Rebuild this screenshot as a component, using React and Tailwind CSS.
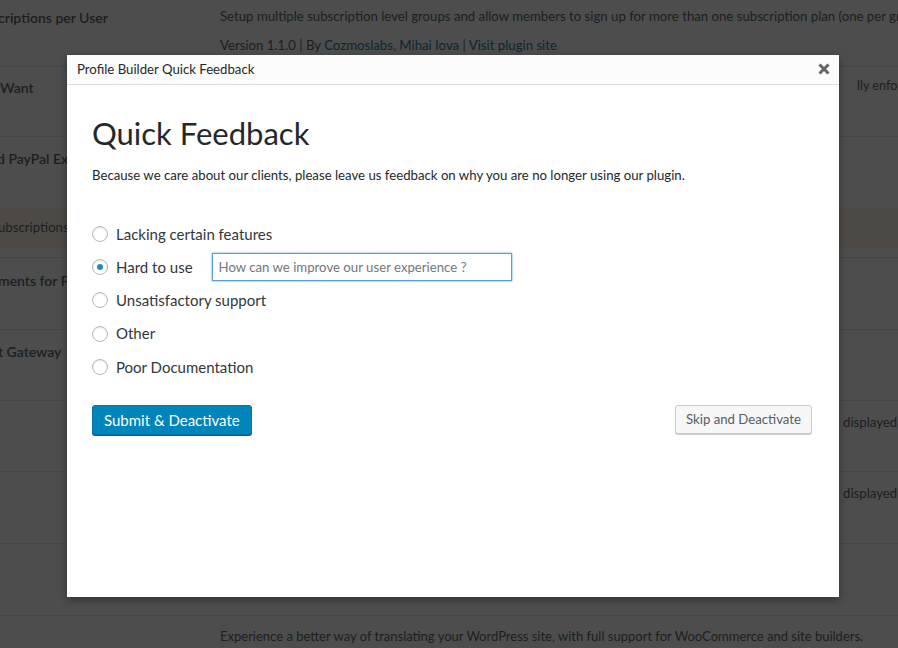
import React, { useState } from 'react';

const font = { fontFamily: 'Lato, "Liberation Sans", sans-serif' };

const reasons = [
    'Lacking certain features',
    'Hard to use',
    'Unsatisfactory support',
    'Other',
    'Poor Documentation',
];

const Radio = ({ checked }) => (
    <span className="w-4 h-4 rounded-full border border-[#b4b9be] bg-white shadow-[inset_0_1px_2px_rgba(0,0,0,0.1)] flex items-center justify-center shrink-0">
        {checked && <span className="w-[6px] h-[6px] rounded-full bg-[#1e8cbe]" />}
    </span>
);

const Background = () => (
    <div className="text-[13.2px] text-[#1c1e20] whitespace-nowrap">
        {/* plugin rows, already dimmed */}
        <div className="h-[67px] border-b border-[#454545] grid grid-cols-[220px_1fr]">
            <div className="pt-[7px] pl-0 font-semibold text-[14px] -ml-[2px]">criptions per User</div>
            <div className="pt-[7px] flex flex-col gap-[9px]">
                <span>Setup multiple subscription level groups and allow members to sign up for more than one subscription plan (one per group).</span>
                <span>Version 1.1.0 | By <span className="text-[#0b2633]">Cozmoslabs, Mihai Iova</span> | <span className="text-[#0b2633]">Visit plugin site</span></span>
            </div>
        </div>
        <div className="h-[70px] border-b border-[#454545] grid grid-cols-[220px_1fr]">
            <div className="pt-[10px] font-semibold text-[14px]">Want</div>
            <div className="pt-[10px] pl-[637px] text-[12.6px]">lly enforce</div>
        </div>
        <div className="h-[71px] grid grid-cols-[220px_1fr]">
            <div className="pt-[11px] font-semibold text-[14px] -ml-[3px]">d PayPal Express</div>
            <div />
        </div>
        <div className="h-[50px] border-b border-[#454545]">
            <div className="h-[40px] bg-[#4d4a45] flex items-center -ml-[2px]">ubscriptions</div>
        </div>
        <div className="h-[72px] border-b border-[#454545] grid grid-cols-[220px_1fr]">
            <div className="pt-[12px] font-semibold text-[14px] -ml-[2px]">ments for Paid</div>
            <div />
        </div>
        <div className="h-[71px] border-b border-[#454545] grid grid-cols-[220px_1fr]">
            <div className="pt-[11px] font-semibold text-[14px] -ml-[2px]">t Gateway</div>
            <div />
        </div>
        <div className="h-[71px] border-b border-[#454545] grid grid-cols-[220px_1fr]">
            <div />
            <div className="pt-[12px] pl-[623px]">displayed on</div>
        </div>
        <div className="h-[72px] border-b border-[#454545] grid grid-cols-[220px_1fr]">
            <div />
            <div className="pt-[12px] pl-[623px]">displayed on</div>
        </div>
        <div className="h-[72px] border-b border-[#454545] grid grid-cols-[220px_1fr]">
            <div />
            <div className="pt-[7px] flex flex-col gap-[8px]">
                <span>Accept payments for subscriptions</span>
                <span className="pl-[50px]">Accept payments via PayPal and recurring payments for your plugin</span>
            </div>
        </div>
        <div className="grid grid-cols-[220px_1fr]">
            <div />
            <div className="pt-[11px] text-[13px]">Experience a better way of translating your WordPress site, with full support for WooCommerce and site builders.</div>
        </div>
    </div>
);

export default function App() {
    const [choice, setChoice] = useState(1);

    return (
        <div className="relative w-[898px] h-[648px] overflow-hidden bg-[#4d4d4d]" style={font}>
            <Background />

            {/* feedback modal */}
            <div className="absolute left-[67px] top-[55px] w-[772px] h-[542px] bg-white shadow-[0_3px_8px_rgba(0,0,0,0.35)] flex flex-col">
                <div className="h-[30px] shrink-0 bg-[#fcfcfc] border-b border-[#dddddd] flex items-center justify-between pl-[10px] pr-[9px]">
                    <span className="text-[13.2px] text-[#23282d]">Profile Builder Quick Feedback</span>
                    <svg width="12" height="12" viewBox="0 0 12 12" className="mt-[-1px]">
                        <path d="M1.5 1.5 L10.5 10.5 M10.5 1.5 L1.5 10.5" stroke="#666" strokeWidth="3" strokeLinecap="butt" />
                    </svg>
                </div>

                <div className="px-[25px] pt-[28px]">
                    <h2 className="text-[31px] leading-[40px] text-[#23282d]">Quick Feedback</h2>
                    <p className="mt-[13px] text-[13.2px] text-[#23282d]">
                        Because we care about our clients, please leave us feedback on why you are no longer using our plugin.
                    </p>

                    <div className="mt-[36px] flex flex-col gap-[9.3px]">
                        {reasons.map((r, i) => (
                            <label key={r} className="h-[24px] flex items-center gap-[8px] cursor-pointer" onClick={() => setChoice(i)}>
                                <Radio checked={choice === i} />
                                <span className="text-[15px] text-[#32373c]">{r}</span>
                                {i === 1 && choice === 1 && (
                                    <input
                                        className="ml-[11px] w-[300px] h-[28px] border border-[#5b9dd9] shadow-[0_0_2px_rgba(30,140,190,0.8)] px-[6px] text-[13.2px] text-[#32373c] placeholder:text-[#72777c] outline-none"
                                        placeholder="How can we improve our user experience ?"
                                    />
                                )}
                            </label>
                        ))}
                    </div>

                    <div className="mt-[26px] flex justify-between items-start pr-[2px]">
                        <button className="h-[30px] px-[11px] rounded-[3px] bg-[#0085ba] border border-[#0073aa] shadow-[0_1px_0_#006799] text-white text-[15px]">
                            Submit &amp; Deactivate
                        </button>
                        <button className="h-[29px] px-[10px] rounded-[3px] bg-[#f7f7f7] border border-[#cccccc] shadow-[0_1px_0_#cccccc] text-[#555d66] text-[13.2px]">
                            Skip and Deactivate
                        </button>
                    </div>
                </div>
            </div>
        </div>
    );
}
